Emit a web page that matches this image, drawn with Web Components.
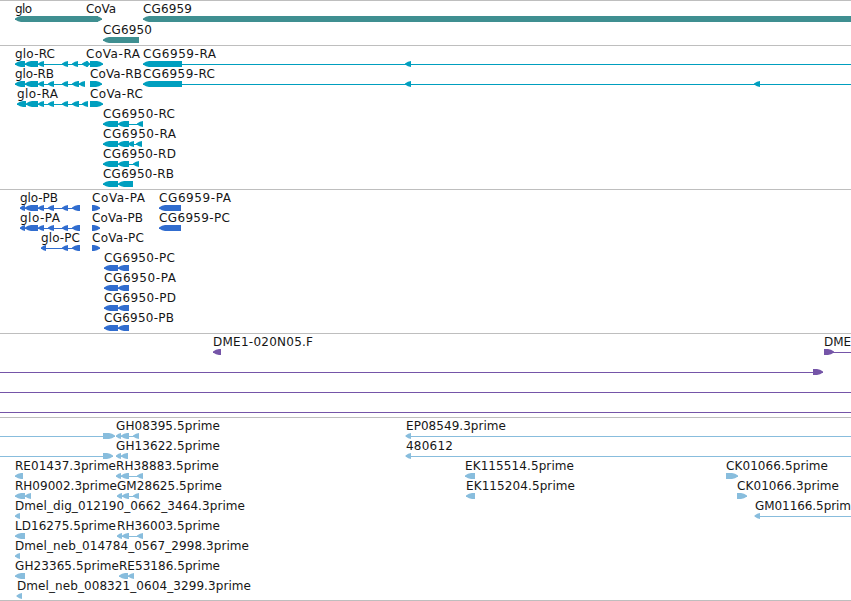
<!DOCTYPE html>
<html lang="en">
<head>
<meta charset="utf-8">
<title>Genome tracks</title>
<style>
  body { margin: 0; background: #fff; color: #000; overflow: hidden; }
</style>
</head>
<body>
<genome-browser></genome-browser>

<script>
// Feature: [label, label x, label width, direction, segments, line span]
// The line span is only given when it runs beyond the segments.
const TRACKS = [
  { id: 'genes', color: '#3f8f91', pitch: 21, pad: 2, rows: [
    [['glo', 15, 17, -1, [[15, 98]]], ['CoVa', 86, 30, 1, [[90, 102]]], ['CG6959', 143, 49, -1, [[143, 851]]]],
    [['CG6950', 103, 49, -1, [[103, 139]]]],
  ] },
  { id: 'transcripts', color: '#009fbf', rows: [
    [['glo-RC', 15, 40, -1, [[15, 25], [25, 38], [38, 44], [62, 68], [72, 78], [82, 88]]], ['CoVa-RA', 86, 54, 1, [[86, 90], [90, 103]]],
     ['CG6959-RA', 143, 73, -1, [[143, 182], [405, 411]], [143, 851]]],
    [['glo-RB', 15, 39, -1, [[15, 25], [25, 38], [38, 44], [48, 54], [62, 68], [72, 79], [79, 85]]], ['CoVa-RB', 90, 52, 1, [[90, 102]]],
     ['CG6959-RC', 143, 72, -1, [[143, 182], [405, 411], [754, 760]], [143, 851]]],
    [['glo-RA', 17, 41, -1, [[17, 26], [26, 38], [38, 44], [48, 54], [62, 68], [72, 79], [82, 88]]], ['CoVa-RC', 90, 53, 1, [[90, 103]]]],
    [['CG6950-RC', 103, 72, -1, [[103, 118], [118, 129], [137, 143]]]],
    [['CG6950-RA', 103, 73, -1, [[103, 118], [118, 129], [128, 134], [136, 142]]]],
    [['CG6950-RD', 103, 73, -1, [[103, 118], [118, 129], [133, 139]]]],
    [['CG6950-RB', 103, 71, -1, [[103, 118], [118, 133]]]],
  ] },
  { id: 'proteins', color: '#316dcf', rows: [
    [['glo-PB', 20, 38, -1, [[20, 25], [25, 38], [38, 44], [48, 54], [62, 68], [72, 80]]], ['CoVa-PA', 92, 53, 1, [[92, 100]]], ['CG6959-PA', 159, 72, -1, [[159, 181]]]],
    [['glo-PA', 20, 40, -1, [[20, 25], [25, 38], [38, 44], [48, 54], [62, 68], [72, 80]]], ['CoVa-PB', 92, 51, 1, [[92, 100]]], ['CG6959-PC', 159, 71, -1, [[159, 181]]]],
    [['glo-PC', 41, 39, -1, [[41, 46], [62, 68], [72, 80]]], ['CoVa-PC', 92, 52, 1, [[92, 100]]]],
    [['CG6950-PC', 104, 71, -1, [[104, 118], [118, 129]]]],
    [['CG6950-PA', 104, 72, -1, [[104, 118], [118, 129]]]],
    [['CG6950-PD', 104, 72, -1, [[104, 118], [118, 129]]]],
    [['CG6950-PB', 104, 70, -1, [[104, 118], [118, 129]]]],
  ] },
  { id: 'bacs', color: '#7555a8', rows: [
    [['DME1-020N05.F', 213, 100, -1, [[213, 221]]], ['DME', 824, 27, 1, [[824, 834]], [824, 851]]],
    [['', 0, 0, 1, [[813, 823]], [0, 823]]],
    [['', 0, 0, 1, [], [0, 851]]],
    [['', 0, 0, 1, [], [0, 851]]],
  ] },
  { id: 'ests', color: '#88bddd', pad: 2, rows: [
    [['', 0, 0, 1, [[103, 115]], [0, 115]], ['GH08395.5prime', 116, 104, -1, [[116, 121], [121, 129], [133, 139]]], ['EP08549.3prime', 406, 100, -1, [[405.5, 411]], [406, 851]]],
    [['', 0, 0, 1, [[103, 113]], [0, 113]], ['GH13622.5prime', 116, 104, -1, [[116, 121], [121, 128]]], ['480612', 406, 47, -1, [[405.5, 411]], [406, 851]]],
    [['RE01437.3prime', 15, 101, -1, [[15, 23]]], ['RH38883.5prime', 116, 103, -1, [[116, 121], [121, 129], [137, 143]]], ['EK115514.5prime', 465, 109, -1, [[465, 475]]], ['CK01066.5prime', 726, 102, 1, [[726, 738]]]],
    [['RH09002.3prime', 15, 102, -1, [[15, 25], [25, 31]]], ['GM28625.5prime', 117, 105, -1, [[117, 122], [122, 129], [133, 139]]], ['EK115204.5prime', 466, 109, -1, [[466, 475]]], ['CK01066.3prime', 737, 102, 1, [[737, 747]]]],
    [['Dmel_dig_012190_0662_3464.3prime', 15, 230, -1, [[15, 20]]], ['GM01166.5prim', 755, 96, -1, [[754.5, 760]], [755, 851]]],
    [['LD16275.5prime', 15, 101, -1, [[15, 25]]], ['RH36003.5prime', 117, 103, -1, [[117, 122], [122, 129], [137, 143]]]],
    [['Dmel_neb_014784_0567_2998.3prime', 15, 234, -1, [[15, 20]]]],
    [['GH23365.5prime', 15, 104, -1, [[15, 25]]], ['RE53186.5prime', 119, 101, -1, [[119, 128], [128, 134]]]],
    [['Dmel_neb_008321_0604_3299.3prime', 17, 234, -1, [[16.5, 22]]]],
  ] },
];

/**
 * One line of features: labels on top, glyphs below.
 */
class FeatureRow extends HTMLElement {
  constructor() {
    super();
    this.attachShadow({ mode: 'open' });
  }

  set features(list) {
    this.shadowRoot.innerHTML = `
      <style>
        :host { display: block; }
        svg { display: block; width: 100%; height: 100%; overflow: visible; fill: var(--track-color); }
        text { font: 12px "DejaVu Sans", sans-serif; fill: #161616; white-space: pre; }
      </style>
      <svg>${list.map(f => this.feature(f)).join('')}</svg>
    `;
  }

  feature([label, x, width, dir, segments, span]) {
    const ends = span || [segments[0][0], segments[segments.length - 1][1]];
    const text = label ? `<text x="${x}" y="12" textLength="${width}">${label}</text>` : '';
    return `
      <rect x="${ends[0]}" y="18" width="${ends[1] - ends[0]}" height="1" shape-rendering="crispEdges"/>
      ${segments.map(([a, b]) => this.arrow(a, b, dir)).join('')}
      ${text}`;
  }

  // The tip bulges a little, so short segments still read as solid heads.
  arrow(a, b, dir) {
    const [tip, tail] = dir < 0 ? [a, b] : [b, a];
    const len = Math.min(6, b - a);
    const neck = tip - dir * len;
    const mid = tip - dir * len / 2;
    return `<path d="M${tip} 17.5L${mid} 15.8L${neck} 15H${tail}V21H${neck}L${mid} 20.2L${tip} 18.5Z"/>`;
  }
}
customElements.define('feature-row', FeatureRow);

class GenomeTrack extends HTMLElement {
  constructor() {
    super();
    this.attachShadow({ mode: 'open' });
  }

  set track({ color, rows, pitch = 20, pad = 3 }) {
    this.shadowRoot.innerHTML = `
      <style>
        :host { display: block; border-bottom: 1px solid #bebebe; padding-bottom: ${pad}px; --track-color: ${color}; }
        feature-row { height: ${pitch}px; }
      </style>
      ${rows.map(() => '<feature-row></feature-row>').join('')}
    `;
    this.shadowRoot.querySelectorAll('feature-row').forEach((el, i) => {
      el.features = rows[i];
    });
  }
}
customElements.define('genome-track', GenomeTrack);

class GenomeBrowser extends HTMLElement {
  constructor() {
    super();
    this.attachShadow({ mode: 'open' });
    this.shadowRoot.innerHTML = `
      <style>
        :host { display: block; width: 851px; height: 601px; overflow: hidden; box-sizing: border-box; border-top: 1px solid #bebebe; background: #fff; }
      </style>
    `;
    TRACKS.forEach(track => {
      const el = document.createElement('genome-track');
      el.track = track;
      this.shadowRoot.append(el);
    });
  }
}
customElements.define('genome-browser', GenomeBrowser);
</script>
</body>
</html>
